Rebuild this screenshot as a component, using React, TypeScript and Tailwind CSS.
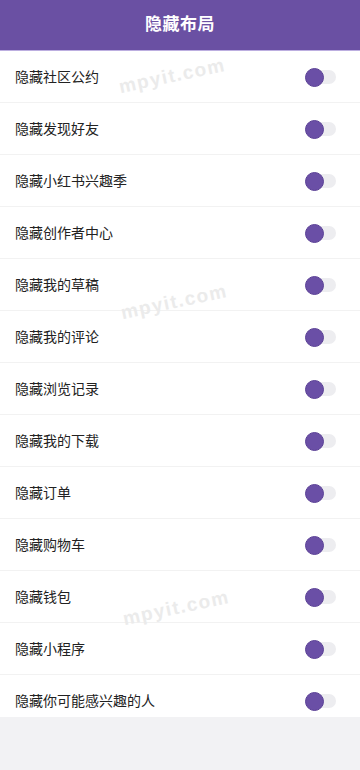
const items = [
  '隐藏社区公约',
  '隐藏发现好友',
  '隐藏小红书兴趣季',
  '隐藏创作者中心',
  '隐藏我的草稿',
  '隐藏我的评论',
  '隐藏浏览记录',
  '隐藏我的下载',
  '隐藏订单',
  '隐藏购物车',
  '隐藏钱包',
  '隐藏小程序',
  '隐藏你可能感兴趣的人',
];

function Toggle() {
  return (
    <div className="relative w-[31px] h-[20px] flex items-center">
      <div className="absolute left-[4px] right-0 h-[14px] rounded-full bg-[#ededf0]" />
      <div className="absolute left-0 w-[19px] h-[19px] rounded-full bg-[#6a4fa6] border border-[#5b4196]" />
    </div>
  );
}

export default function App() {
  return (
    <div
      className="relative w-full min-h-[770px] bg-[#f2f2f4]"
      style={{ fontFamily: '"Liberation Sans", "Noto Sans CJK SC", sans-serif' }}
    >
      <div className="h-[51px] bg-[#6a50a3] border-b border-[#bcaee0] flex items-center justify-center">
        <h1 className="text-[17px] font-bold text-white tracking-[0.5px]">隐藏布局</h1>
      </div>

      <div className="bg-white">
        {items.map((label, i) => {
          const last = i === items.length - 1;
          return (
            <div
              key={label}
              className={`flex items-start justify-between pl-[15px] pr-[24px] pt-[16px] ${
                last ? 'h-[42px]' : 'h-[52px] border-b border-[#f2f2f2]'
              }`}
            >
              <span className="text-[14px] leading-[20px] text-[#222]">{label}</span>
              <Toggle />
            </div>
          );
        })}
      </div>

      {/* watermark */}
      {[{ t: 'top-[62px] left-[118px]' }, { t: 'top-[288px] left-[120px]' }, { t: 'top-[594px] left-[122px]' }].map((w, i) => (
        <div
          key={i}
          className={`absolute ${w.t} -rotate-12 text-[19px] font-bold text-[#ebebeb] tracking-[1.5px] pointer-events-none`}
        >
          mpyit.com
        </div>
      ))}
    </div>
  );
}
